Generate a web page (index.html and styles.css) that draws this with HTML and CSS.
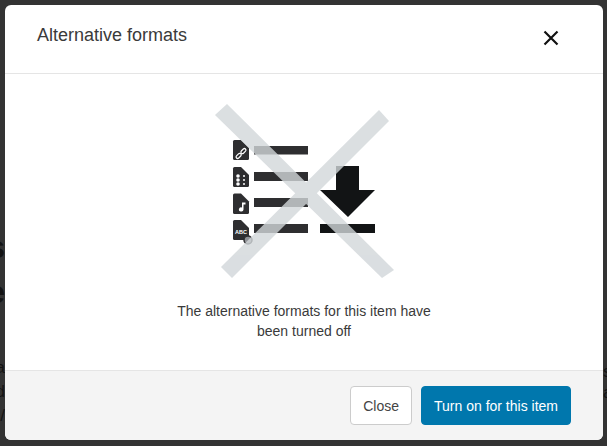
FILE: index.html
```html
<!DOCTYPE html>
<html lang="en">
<head>
<meta charset="utf-8">
<title>Alternative formats</title>
<link rel="stylesheet" href="styles.css">
</head>
<body>
<div class="page">
  <div class="under under-left">
    <span class="big first">Cs</span>
    <span class="big second">Le</span>
    <span class="small third">a</span>
    <span class="small">d</span>
    <span class="small">/</span>
  </div>
  <div class="under under-right">
    <span class="small third">s</span>
    <span class="small">a</span>
  </div>
</div>
<div class="modal" role="dialog">
  <header class="modal-header">
    <h1 class="modal-title">Alternative formats</h1>
    <button class="modal-close" type="button" aria-label="Close">
      <svg width="16" height="16" viewBox="0 0 16 16"><path d="M1.5 1.5 14.5 14.5M14.5 1.5 1.5 14.5" stroke="#111" stroke-width="2.2" fill="none"/></svg>
    </button>
  </header>
  <main class="modal-body">
    <svg class="illustration" width="200" height="195" viewBox="0 0 200 195">
      <g fill="#2f2f31">
        <rect x="54" y="51" width="54" height="8.5"/>
        <rect x="54" y="77" width="54" height="9"/>
        <rect x="54" y="103" width="54" height="9"/>
        <rect x="54" y="129" width="54" height="9"/>
      </g>
      <g fill="#131416">
        <path d="M136 71H159V95H175L148 122 120 95H136Z"/>
        <rect x="120" y="129" width="55" height="9"/>
      </g>
      <g fill="#2f2f31">
        <path d="M34.500 45H41L49 53V63.500Q49 65 47.500 65H34.500Q33 65 33 63.500V46.500Q33 45 34.500 45Z"/>
        <path d="M34.500 72H41L49 80V90.500Q49 92 47.500 92H34.500Q33 92 33 90.500V73.500Q33 72 34.500 72Z"/>
        <path d="M34.500 98.500H41L49 106.500V117.500Q49 119 47.500 119H34.500Q33 119 33 117.500V100Q33 98.500 34.500 98.500Z"/>
        <path d="M34.500 125H41L49 133V143.500Q49 145 47.500 145H34.500Q33 145 33 143.500V126.500Q33 125 34.500 125Z"/>
      </g>
      <g fill="none" stroke="#fff" stroke-width="1.200" stroke-linecap="round">
        <path d="M36.500 60.800 38.500 58.800Q39.500 57.800 40.700 58.800T40.700 61L38.700 63Q37.500 64 36.500 63T36.500 60.800Z"/>
        <path d="M41.300 56 43.300 54Q44.500 53 45.500 54T45.500 56.200L43.500 58.200Q42.300 59.200 41.300 58.200T41.300 56Z"/>
      </g>
      <g fill="#fff">
        <circle cx="38" cy="81" r="1.800"/><circle cx="38" cy="85" r="1.800"/><circle cx="38" cy="89" r="1.800"/>
        <circle cx="44" cy="81" r="1"/><circle cx="44" cy="85" r="1"/><circle cx="44" cy="89" r="1"/>
        <path d="M42 107.500H45.500V109.500H43.500V114.500A2.300 2.100 0 1 1 42 112.500Z"/>
      </g>
      <text class="abc" x="41" y="139" text-anchor="middle">ABC</text>
      <circle cx="48" cy="145" r="4" fill="#8f9295" stroke="#2f2f31" stroke-width="1.500"/>
      <g class="cross">
        <path d="M15 20 27 9 194 175 182 183Z"/>
        <path d="M179 15 189 26 32 183 21 172Z"/>
      </g>
    </svg>
    <p class="modal-text">The alternative formats for this item have<br>been turned off</p>
  </main>
  <footer class="modal-footer">
    <button class="btn btn-secondary" type="button">Close</button>
    <button class="btn btn-primary" type="button">Turn on for this item</button>
  </footer>
</div>
</body>
</html>
```
FILE: styles.css
```css
* {
  box-sizing: border-box;
}

html,
body {
  margin: 0;
  height: 100%;
  overflow: hidden;
}

body {
  background: #333;
  font-family: "Liberation Sans", Arial, sans-serif;
  color: #333;
}

.page {
  display: flex;
  justify-content: space-between;
  height: 446px;
}

.under {
  display: flex;
  flex-direction: column;
  align-items: flex-end;
  width: 5px;
  overflow: hidden;
  color: #131313;
  white-space: nowrap;
}

.under-right {
  width: 4px;
  align-items: flex-start;
}

.big {
  font-size: 32px;
  font-weight: 700;
  line-height: 45px;
}

.first {
  margin-top: 225px;
}

.small {
  font-size: 17px;
  line-height: 21px;
}

.under-left .small {
  line-height: 24px;
}

.under-left .third {
  margin-top: 41px;
}

.under-right .third {
  margin-top: 361px;
}

.modal {
  position: absolute;
  left: 5px;
  top: 5px;
  width: 598px;
  height: 435px;
  display: flex;
  flex-direction: column;
  background: #fff;
  border-radius: 6px;
  overflow: hidden;
}

.modal-header {
  display: flex;
  justify-content: space-between;
  align-items: flex-start;
  height: 69px;
  padding: 20px 44px 0 32px;
  border-bottom: 1px solid #e5e5e5;
}

.modal-title {
  margin: 0;
  font-size: 18px;
  font-weight: 400;
  line-height: 21px;
  color: #3a3a3a;
}

.modal-close {
  display: block;
  margin-top: 5px;
  padding: 0;
  width: 16px;
  height: 16px;
  background: none;
  border: 0;
}

.modal-close svg {
  display: block;
}

.modal-body {
  flex: 1;
  display: flex;
  flex-direction: column;
  align-items: center;
  padding-top: 21px;
}

.illustration {
  display: block;
  flex: none;
  margin-right: 8px;
}

.cross {
  fill: #d2d7da;
  opacity: 0.8;
}

.abc {
  font-family: "Liberation Sans", Arial, sans-serif;
  font-size: 5.500px;
  font-weight: 700;
  fill: #fff;
}

.modal-text {
  margin: 11px 0 0;
  font-size: 14px;
  line-height: 20px;
  text-align: center;
  color: #3a3a3a;
}

.modal-footer {
  display: flex;
  justify-content: flex-end;
  align-items: center;
  gap: 9px;
  height: 70px;
  padding: 0 32px;
  background: #f4f4f4;
  border-top: 1px solid #e5e5e5;
}

.btn {
  height: 39px;
  padding: 0 12px;
  border-radius: 4px;
  font-family: inherit;
  font-size: 14px;
  line-height: 20px;
}

.btn-secondary {
  background: #fff;
  border: 1px solid #ccc;
  color: #444;
}

.btn-primary {
  background: #0077ad;
  border: 1px solid #0077ad;
  color: #fff;
}
```
